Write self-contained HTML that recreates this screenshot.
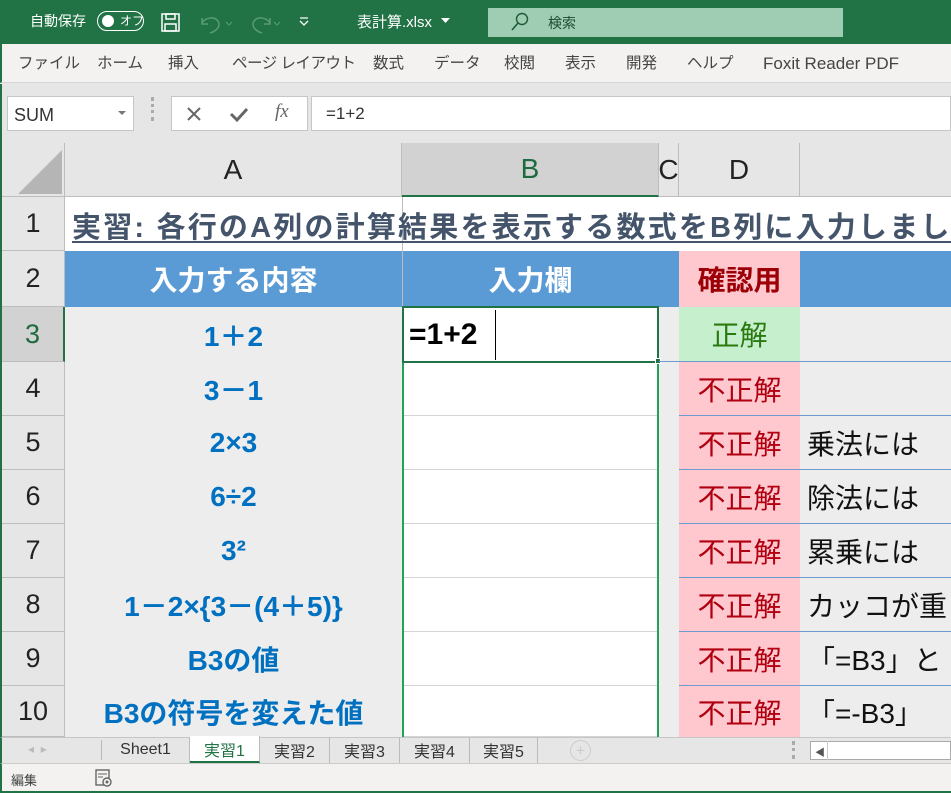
<!DOCTYPE html><html><head><meta charset="utf-8"><style>
*{margin:0;padding:0;box-sizing:border-box}
body{width:951px;height:793px;overflow:hidden;background:#e6e6e6;font-family:"Liberation Sans","Noto Sans CJK JP",sans-serif;position:relative}
.a{position:absolute}
.c{display:flex;align-items:center;justify-content:center}
.rh{left:2px;width:63px;background:#e6e6e6;border-bottom:1px solid #bdbdbd;border-right:1px solid #bdbdbd;font-size:27px;color:#222}
.ac{left:65px;width:337px;font-size:28px;font-weight:bold;color:#0070c0}
.bc{left:403px;width:255px;background:#fff;border-bottom:1px solid #d4d4d4}
.dc{left:679px;width:121px;background:#ffc7ce;color:#b00010;font-size:28px;border-bottom:1px solid #6e9ad0}
.ec{left:800px;width:151px;background:#ededed;border-bottom:1px solid #6e9ad0;font-size:28px;color:#111;white-space:nowrap;overflow:hidden;justify-content:flex-start;padding-left:7px}
.tab{top:737px;height:26px;font-size:16px;color:#333;border-right:1px solid #bbb;padding:0 10px}
.rt{position:absolute;top:0;line-height:20px;white-space:nowrap}
</style></head><body>
<div class="a" style="left:0;top:0;width:951px;height:44px;background:#217346"></div>
<div class="a" style="left:30px;top:11px;color:#fff;font-size:14px">自動保存</div>
<div class="a" style="left:97px;top:11px;width:47px;height:20px;border:1.5px solid #fff;border-radius:10px"></div>
<div class="a" style="left:102px;top:15px;width:12px;height:12px;border-radius:6px;background:#fff"></div>
<div class="a" style="left:120px;top:12px;color:#fff;font-size:12px">オフ</div>
<svg class="a" style="left:161px;top:13px" width="20" height="20"><rect x="1" y="1" width="17" height="17" fill="none" stroke="#fff" stroke-width="1.5"/><rect x="5" y="1" width="9" height="5" fill="none" stroke="#fff" stroke-width="1.5"/><rect x="4" y="11" width="11" height="7" fill="none" stroke="#fff" stroke-width="1.5"/></svg>
<svg class="a" style="left:198px;top:12px" width="100" height="22"><path d="M4 6 L4 12 L10 12 M4 11 C8 4 20 4 21 12 C21 17 16 20 12 21" fill="none" stroke="#5a9a74" stroke-width="1.5"/><path d="M28 10 l3 3 l3 -3" fill="none" stroke="#5a9a74"/><path d="M72 6 L72 12 L66 12 M72 11 C68 4 56 4 55 12 C55 17 60 20 64 21" fill="none" stroke="#5a9a74" stroke-width="1.5"/><path d="M76 10 l3 3 l3 -3" fill="none" stroke="#5a9a74"/></svg>
<svg class="a" style="left:298px;top:15px" width="12" height="12"><path d="M2 3 H10 M2 6 L6 10 L10 6" fill="none" stroke="#fff" stroke-width="1.3"/></svg>
<div class="a" style="left:357px;top:11px;color:#fff;font-size:15px">表計算.xlsx</div>
<svg class="a" style="left:441px;top:18px" width="10" height="6"><path d="M0 0 H9 L4.5 5Z" fill="#fff"/></svg>
<div class="a" style="left:488px;top:8px;width:355px;height:29px;background:#9fcdb3"></div>
<svg class="a" style="left:510px;top:12px" width="20" height="20"><circle cx="12" cy="7" r="5.5" fill="none" stroke="#1e5a36" stroke-width="1.4"/><path d="M8 11 L2 18" stroke="#1e5a36" stroke-width="1.6"/></svg>
<div class="a" style="left:548px;top:13px;font-size:14px;color:#1e4a30">検索</div>
<div class="a" style="left:0;top:44px;width:951px;height:39px;background:#f3f2f1;border-bottom:1px solid #d6d6d6;border-left:2px solid #217346"></div>
<div class="a" style="top:54px;left:0;width:951px;height:20px;font-size:15.5px;color:#444;overflow:hidden">
<span class="rt" style="left:18px">ファイル</span><span class="rt" style="left:97px">ホーム</span><span class="rt" style="left:168px">挿入</span><span class="rt" style="left:232px;letter-spacing:-0.5px">ページ レイアウト</span><span class="rt" style="left:373px">数式</span><span class="rt" style="left:434px">データ</span><span class="rt" style="left:504px">校閲</span><span class="rt" style="left:565px">表示</span><span class="rt" style="left:626px">開発</span><span class="rt" style="left:687px">ヘルプ</span><span class="rt" style="left:763px;font-size:17px">Foxit Reader PDF</span></div>
<div class="a" style="left:0;top:84px;width:951px;height:59px;background:#e6e6e6;border-left:2px solid #217346"></div>
<div class="a" style="left:7px;top:96px;width:127px;height:35px;background:#fff;border:1px solid #c6c6c6"></div>
<div class="a" style="left:14px;top:105px;font-size:18px;color:#333">SUM</div>
<svg class="a" style="left:118px;top:111px" width="9" height="5"><path d="M0 0H8L4 4Z" fill="#777"/></svg>
<div class="a" style="left:151px;top:97px;width:3px;height:24px;border-left:3px dotted #aaa"></div>
<div class="a" style="left:171px;top:96px;width:137px;height:35px;background:#fff;border:1px solid #c6c6c6"></div>
<svg class="a" style="left:185px;top:105px" width="18" height="18"><path d="M3 3 L15 15 M15 3 L3 15" stroke="#666" stroke-width="2"/></svg>
<svg class="a" style="left:229px;top:105px" width="20" height="18"><path d="M2 9 L8 15 L18 4" fill="none" stroke="#666" stroke-width="3"/></svg>
<div class="a" style="left:275px;top:101px;font-size:19px;font-style:italic;font-family:'Liberation Serif',serif;color:#666">fx</div>
<div class="a" style="left:311px;top:96px;width:640px;height:35px;background:#fff;border:1px solid #c6c6c6"></div>
<div class="a" style="left:326px;top:104px;font-size:17px;color:#333">=1+2</div>
<div class="a" style="left:0;top:143px;width:951px;height:594px;background:#ededed;border-left:2px solid #217346"></div>
<div class="a" style="left:2px;top:143px;width:63px;height:54px;background:#e6e6e6;border-right:1px solid #bdbdbd;border-bottom:1px solid #bdbdbd"></div>
<svg class="a" style="left:16px;top:148px" width="48" height="46"><path d="M46 2 V46 H2Z" fill="#b5b5b5"/></svg>
<div class="a c" style="left:65px;top:143px;width:337px;height:54px;background:#e6e6e6;border-right:1px solid #bdbdbd;border-bottom:1px solid #bdbdbd;font-size:28px;color:#222">A</div>
<div class="a c" style="left:402px;top:143px;width:257px;height:54px;background:#d2d2d2;border-bottom:2px solid #217346;border-right:1px solid #bdbdbd;font-size:28px;color:#1e6b40">B</div>
<div class="a c" style="left:659px;top:143px;width:20px;height:54px;background:#e6e6e6;border-right:1px solid #bdbdbd;border-bottom:1px solid #bdbdbd;font-size:28px;color:#222;overflow:hidden">C</div>
<div class="a c" style="left:679px;top:143px;width:121px;height:54px;background:#e6e6e6;border-right:1px solid #bdbdbd;border-bottom:1px solid #bdbdbd;font-size:28px;color:#222">D</div>
<div class="a" style="left:800px;top:143px;width:151px;height:54px;background:#e6e6e6;border-bottom:1px solid #bdbdbd"></div>
<div class="a" style="left:65px;top:197px;width:886px;height:54px;background:#fff;overflow:hidden">
<div style="position:absolute;left:337px;top:0;width:1px;height:54px;background:#bdbdbd"></div>
<div style="position:absolute;left:7px;top:7px;font-size:29px;font-weight:bold;color:#44546a;text-decoration:underline;text-underline-offset:4px;white-space:nowrap;letter-spacing:2.2px">実習: 各行のA列の計算結果を表示する数式をB列に入力しましょう</div>
</div>
<div class="a" style="left:65px;top:251px;width:886px;height:56px;background:#5b9bd5"></div>
<div class="a c" style="left:65px;top:251px;width:337px;height:56px;color:#fff;font-size:28px;font-weight:bold">入力する内容</div>
<div class="a c" style="left:402px;top:251px;width:257px;height:56px;color:#fff;font-size:28px;font-weight:bold">入力欄</div>
<div class="a c" style="left:679px;top:251px;width:121px;height:56px;background:#ffc7ce;color:#9c0006;font-size:28px;font-weight:bold">確認用</div>
<div class="a" style="left:402px;top:251px;width:1px;height:56px;background:#bdbdbd"></div>
<div class="a rh c" style="top:197px;height:54px">1</div>
<div class="a rh c" style="top:251px;height:56px">2</div>
<div class="a rh c" style="top:307px;height:55px;background:#d2d2d2;border-right:2px solid #217346;color:#1e6b40">3</div>
<div class="a rh c" style="top:362px;height:54px">4</div>
<div class="a rh c" style="top:416px;height:54px">5</div>
<div class="a rh c" style="top:470px;height:54px">6</div>
<div class="a rh c" style="top:524px;height:54px">7</div>
<div class="a rh c" style="top:578px;height:54px">8</div>
<div class="a rh c" style="top:632px;height:54px">9</div>
<div class="a rh c" style="top:686px;height:51px">10</div>
<div class="a ac c" style="top:307px;height:55px">1＋2</div>
<div class="a ac c" style="top:362px;height:54px">3－1</div>
<div class="a ac c" style="top:416px;height:54px">2×3</div>
<div class="a ac c" style="top:470px;height:54px">6÷2</div>
<div class="a ac c" style="top:524px;height:54px">3²</div>
<div class="a ac c" style="top:578px;height:54px">1－2×{3－(4＋5)}</div>
<div class="a ac c" style="top:632px;height:54px">B3の値</div>
<div class="a ac c" style="top:686px;height:51px">B3の符号を変えた値</div>
<div class="a bc" style="top:307px;height:55px"></div>
<div class="a bc" style="top:362px;height:54px"></div>
<div class="a bc" style="top:416px;height:54px"></div>
<div class="a bc" style="top:470px;height:54px"></div>
<div class="a bc" style="top:524px;height:54px"></div>
<div class="a bc" style="top:578px;height:54px"></div>
<div class="a bc" style="top:632px;height:54px"></div>
<div class="a bc" style="top:686px;height:51px"></div>
<div class="a" style="left:402px;top:307px;width:1.5px;height:430px;background:#21a356"></div>
<div class="a" style="left:657px;top:307px;width:2px;height:430px;background:#21a356"></div>
<div class="a" style="left:402px;top:306px;width:257px;height:57px;border:2px solid #217346"></div>
<div class="a" style="left:655px;top:358px;width:6px;height:6px;background:#217346;border:1px solid #fff"></div>
<div class="a c" style="left:409px;top:308px;height:53px;font-size:30px;font-weight:bold;color:#000">=1+2</div>
<div class="a" style="left:495px;top:310px;width:1px;height:50px;background:#000"></div>
<div class="a dc c" style="top:307px;height:55px;background:#c6efce;color:#2a7a10">正解</div>
<div class="a dc c" style="top:362px;height:54px">不正解</div>
<div class="a dc c" style="top:416px;height:54px">不正解</div>
<div class="a dc c" style="top:470px;height:54px">不正解</div>
<div class="a dc c" style="top:524px;height:54px">不正解</div>
<div class="a dc c" style="top:578px;height:54px">不正解</div>
<div class="a dc c" style="top:632px;height:54px">不正解</div>
<div class="a dc c" style="top:686px;height:51px;border-bottom:none">不正解</div>
<div class="a ec c" style="top:307px;height:55px"></div>
<div class="a ec c" style="top:362px;height:54px"></div>
<div class="a ec c" style="top:416px;height:54px">乗法には</div>
<div class="a ec c" style="top:470px;height:54px">除法には</div>
<div class="a ec c" style="top:524px;height:54px">累乗には</div>
<div class="a ec c" style="top:578px;height:54px">カッコが重</div>
<div class="a ec c" style="top:632px;height:54px">「=B3」と</div>
<div class="a ec c" style="top:686px;height:51px;border-bottom:none">「=-B3」</div>
<div class="a" style="left:659px;top:361px;width:20px;height:1px;background:#6e9ad0"></div>
<div class="a" style="left:0;top:737px;width:951px;height:26px;background:#e6e6e6;border-top:1px solid #c6c6c6;border-left:2px solid #217346"></div>
<div class="a" style="left:28px;top:742px;font-size:12px;color:#bbb">◂ &nbsp;▸</div>
<div class="a" style="left:101px;top:740px;width:1px;height:20px;background:#bbb"></div>
<div class="a tab c" style="left:102px;width:88px">Sheet1</div>
<div class="a tab c" style="left:190px;width:70px;background:#fff;color:#217346;border-bottom:2px solid #217346;top:736px;height:27px">実習1</div>
<div class="a tab c" style="left:260px;width:70px">実習2</div>
<div class="a tab c" style="left:330px;width:70px">実習3</div>
<div class="a tab c" style="left:400px;width:70px">実習4</div>
<div class="a tab c" style="left:470px;width:68px">実習5</div>
<div class="a c" style="left:570px;top:740px;width:21px;height:21px;border:1.5px solid #ccc;border-radius:50%;color:#ccc;font-size:17px">+</div>
<div class="a" style="left:792px;top:741px;width:3px;height:18px;border-left:3px dotted #aaa"></div>
<div class="a" style="left:810px;top:741px;width:141px;height:19px;background:#fff;border:1px solid #aaa"></div>
<div class="a" style="left:810px;top:741px;width:18px;height:19px;border-right:1px solid #ccc;font-size:10px;color:#555;padding:3px 0 0 5px">◀</div>
<div class="a" style="left:0;top:763px;width:951px;height:30px;background:#f3f2f1;border-top:1px solid #ccc;border-left:2px solid #217346;border-bottom:2px solid #217346"></div>
<div class="a" style="left:11px;top:770px;font-size:13px;color:#444">編集</div>
<svg class="a" style="left:95px;top:769px" width="18" height="18"><rect x="1" y="1" width="13" height="15" fill="none" stroke="#666" stroke-width="1.4"/><path d="M3 5H12M3 8H8" stroke="#666"/><circle cx="12" cy="13" r="4" fill="#f3f2f1" stroke="#666" stroke-width="1.4"/><circle cx="12" cy="13" r="1.5" fill="#666"/></svg>
</body></html>
